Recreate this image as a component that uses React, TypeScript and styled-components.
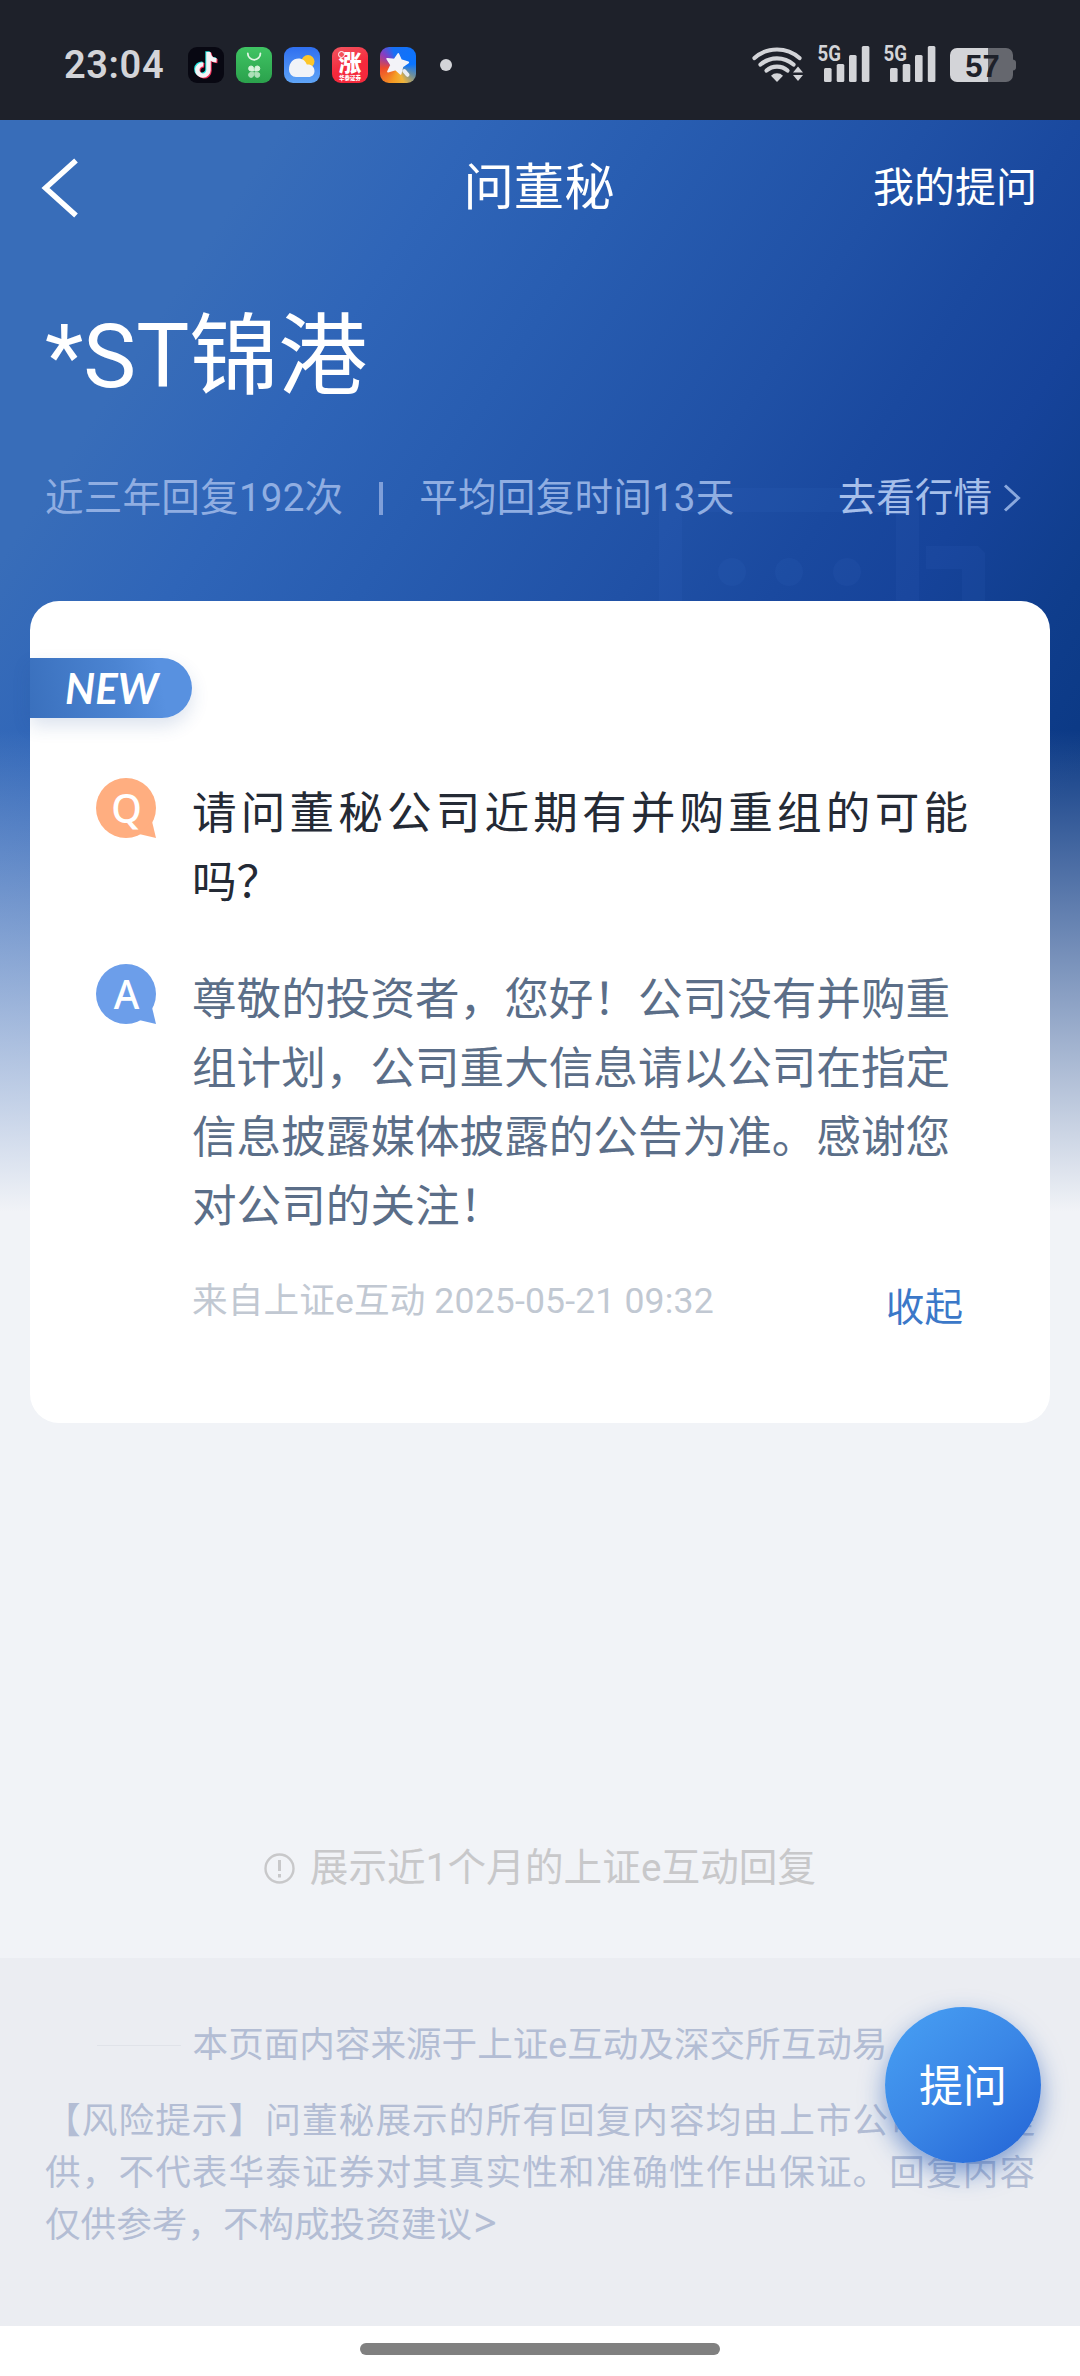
import React from 'react';
import styled, { createGlobalStyle } from 'styled-components';

const sans = `Roboto, 'Noto Sans CJK SC', sans-serif`;

const GlobalStyle = createGlobalStyle`
  *, *::before, *::after { box-sizing: border-box; }
  body { margin: 0; background: #ffffff; }
  p, h1, h2 { margin: 0; font-weight: 400; }
  button { border: 0; padding: 0; background: none; font: inherit; color: inherit; }
  svg { display: block; overflow: visible; }
`;

const Screen = styled.div`
  position: relative;
  width: 1080px;
  height: 2376px;
  display: flex;
  flex-direction: column;
  overflow: hidden;
  background: #f1f3f7;
  font-family: ${sans};
`;

const StatusBar = styled.header`
  height: 120px;
  flex: none;
  display: flex;
  align-items: flex-start;
  justify-content: space-between;
  padding: 45px 64px 0 64px;
  background: #1e212a;
  color: #d3d4d8;
`;

const StatusGroup = styled.div<{ $gap: number }>`
  display: flex;
  align-items: flex-start;
  gap: ${(p) => p.$gap}px;
`;

const Clock = styled.span`
  width: 112px;
  margin-top: -4px;
  font-size: 38px;
  line-height: 48px;
  font-weight: 600;
  letter-spacing: 0.6px;
`;

const AppIcon = styled.span<{ $bg: string }>`
  width: 36px;
  height: 36px;
  margin-top: 2px;
  border-radius: 9px;
  overflow: hidden;
  background: ${(p) => p.$bg};
`;

const RiseIcon = styled(AppIcon)`
  position: relative;
  display: flex;
  flex-direction: column;
  align-items: center;
  color: #fff;
  font-family: 'Noto Sans CJK SC', sans-serif;
  font-weight: 900;

  &::before {
    content: '';
    position: absolute;
    left: 6px;
    top: 4px;
    width: 7px;
    height: 7px;
    border: 1.5px solid #fff;
    border-radius: 50%;
    background: #f4525e;
  }
`;

const RiseGlyph = styled.span`
  font-size: 23px;
  line-height: 28px;
`;

const RiseCaption = styled.span`
  font-size: 5.5px;
  line-height: 7px;
`;

const MoreDot = styled.span`
  width: 12px;
  height: 12px;
  margin: 14px 0 0 12px;
  border-radius: 50%;
  background: #d3d4d8;
`;

const Backdrop = styled.div`
  position: absolute;
  top: 120px;
  left: 0;
  width: 1080px;
  height: 1092px;
  background:
    linear-gradient(180deg, rgba(241, 243, 247, 0) 610px, #f1f3f7 1092px),
    linear-gradient(123deg, #386db9 0, #386db9 240px, #2f65b8 400px, #285db1 560px,
      #2051a6 780px, #1a499f 906px, #16439a 1020px, #0f3d8c 1155px, #0b3984 1260px);
`;

const BackdropArt = styled.svg`
  position: absolute;
  left: 640px;
  top: 350px;
`;

const Content = styled.main`
  position: relative;
  flex: 1;
  display: flex;
  flex-direction: column;
`;

const NavBar = styled.nav`
  height: 136px;
  display: grid;
  grid-template-columns: 1fr auto 1fr;
  align-items: center;
  padding: 0 43px 0 41px;
  color: #fff;
`;

const NavTitle = styled.h1`
  font-size: 50.4px;
  line-height: 60px;
`;

const NavLink = styled.button`
  justify-self: end;
  font-size: 41px;
  line-height: 50px;
`;

const Hero = styled.section`
  height: 345px;
  padding: 48px 45px 0;
  color: #fff;
`;

const StockName = styled.h2`
  font-size: 89px;
  line-height: 106px;
`;

const MetaRow = styled.div`
  display: flex;
  align-items: center;
  justify-content: space-between;
  margin-top: 63px;
  padding-right: 14px;
  font-size: 38.6px;
  line-height: 50px;
  color: #90aee2;
`;

const Stats = styled.div`
  display: flex;
  align-items: center;
  gap: 36px;
  letter-spacing: 0.2px;
`;

const StatDivider = styled.span`
  width: 4px;
  height: 33px;
  background: #7f9fd9;
`;

const QuoteLink = styled.button`
  display: flex;
  align-items: center;
  gap: 11px;
  color: #a6bfea;
`;

const Card = styled.article`
  height: 822px;
  flex: none;
  margin: 0 30px;
  padding-top: 57px;
  border-radius: 29px;
  background: #fff;
`;

const NewTag = styled.div`
  width: 162px;
  height: 60px;
  display: flex;
  align-items: center;
  padding-left: 35px;
  border-radius: 0 30px 30px 0;
  background: linear-gradient(80deg, #3a70bd 0%, #4b84d2 55%, #5891e0 80%);
  box-shadow: 0 8px 18px rgba(40, 80, 150, 0.16);
  color: #fff;
  font-family: Lato, sans-serif;
  font-style: italic;
  font-weight: 700;
  font-size: 42px;
  line-height: 60px;
`;

const Entry = styled.div<{ $top: number }>`
  display: grid;
  grid-template-columns: 60px 776px;
  column-gap: 36px;
  margin-top: ${(p) => p.$top}px;
  padding-left: 66px;
`;

const Bubble = styled.span<{ $color: string }>`
  position: relative;
  width: 60px;
  height: 60px;
  display: flex;
  align-items: center;
  justify-content: center;
  padding-left: 1px;
  border-radius: 50%;
  background: ${(p) => p.$color};
  color: #fff;
  font-family: 'Noto Sans', sans-serif;
  font-size: 39px;
  font-weight: 500;
  line-height: 60px;

  &::after {
    content: '';
    position: absolute;
    right: 0;
    bottom: 0;
    width: 17px;
    height: 17px;
    background: ${(p) => p.$color};
    clip-path: polygon(76% 0, 100% 100%, 0 76%);
  }
`;

const Question = styled.p`
  padding-top: 2px;
  margin-bottom: -2px;
  font-size: 44.6px;
  line-height: 69px;
  text-align: justify;
  color: #242a35;
`;

const Answer = styled.p`
  padding-top: 2px;
  margin-bottom: -2px;
  font-size: 44.6px;
  line-height: 69px;
  color: #5b6e88;
`;

const SourceRow = styled.div`
  display: flex;
  justify-content: space-between;
  margin: 37px 87px 0 162px;
`;

const Source = styled.span`
  font-size: 35.6px;
  line-height: 48px;
  letter-spacing: 0.15px;
  color: #c1c8d2;
`;

const Collapse = styled.button`
  padding-top: 6px;
  font-size: 38.6px;
  line-height: 50px;
  color: #3b78c8;
`;

const Notice = styled.div`
  display: flex;
  align-items: center;
  justify-content: center;
  gap: 15px;
  margin-top: 420px;
  font-size: 38.6px;
  line-height: 50px;
  letter-spacing: 0.1px;
  color: #c8c8ca;
`;

const Footer = styled.footer`
  height: 368px;
  margin-top: auto;
  padding: 61px 45px 0;
  background: #ebedf2;
  font-size: 35.6px;
  line-height: 52px;
  color: #b3bdd4;
`;

const SourceNote = styled.div`
  display: flex;
  align-items: center;
  justify-content: center;
  gap: 12px;
`;

const Rule = styled.span`
  width: 84px;
  height: 1px;
  background: #e0e3e9;
`;

const Risk = styled.p`
  margin-top: 24px;
  text-align: justify;
`;

const Arrow = styled.span`
  padding-left: 2px;
  font-family: 'Noto Sans', sans-serif;
  font-size: 40px;
  font-weight: 500;
  line-height: 1;
`;

const HomeArea = styled.div`
  height: 50px;
  flex: none;
  display: flex;
  justify-content: center;
  padding-top: 17px;
  background: #fff;
`;

const HomeBar = styled.span`
  width: 360px;
  height: 12px;
  border-radius: 6px;
  background: #808080;
`;

const AskButton = styled.button`
  position: absolute;
  left: 885px;
  top: 2007px;
  width: 156px;
  height: 156px;
  padding-top: 5px;
  border-radius: 50%;
  background: linear-gradient(140deg, #4499f0 15%, #3a86e6 50%, #2668d7 92%);
  box-shadow: 0 10px 24px rgba(32, 88, 180, 0.55);
  color: #fff;
  font-size: 44px;
  line-height: 151px;
  text-align: center;
`;

const TikTokIcon = () => (
  <AppIcon $bg="#080812">
    <svg width="36" height="36" viewBox="0 0 36 36" fill="none" strokeWidth="4.4">
      <path transform="translate(-1 -0.8)" stroke="#25e6e0" d="M20.5 5v18a5.6 5.6 0 1 1-5.2-5.6M20.5 6c.6 4.2 3.5 7 8 7.3" />
      <path transform="translate(1 0.8)" stroke="#f5305a" d="M20.5 5v18a5.6 5.6 0 1 1-5.2-5.6M20.5 6c.6 4.2 3.5 7 8 7.3" />
      <path stroke="#f4f4f6" d="M20.5 5v18a5.6 5.6 0 1 1-5.2-5.6M20.5 6c.6 4.2 3.5 7 8 7.3" />
    </svg>
  </AppIcon>
);

const StoreIcon = () => (
  <AppIcon $bg="linear-gradient(180deg, #3fc463, #2ba14c)">
    <svg width="36" height="36" viewBox="0 0 36 36">
      <path d="M11.8 6.5a6.3 6.3 0 0 0 12.6 0" fill="none" stroke="#dff5e3" strokeWidth="1.8" strokeLinecap="round" />
      <g fill="#d8f2dc">
        <path d="M17.6 24h-2.6a2.5 2.5 0 1 1 2.6-2.6z" stroke="#d8f2dc" />
        <path d="M18.8 24h2.6a2.5 2.5 0 1 0-2.6-2.6z" stroke="#d8f2dc" />
        <path d="M17.6 25.400h-2.600a2.500 2.500 0 1 0 2.600 2.600z" stroke="#d8f2dc" opacity="0.75" />
        <path d="M18.800 25.400h2.600a2.500 2.500 0 1 1-2.600 2.600z" stroke="#d8f2dc" opacity="0.75" />
      </g>
    </svg>
  </AppIcon>
);

const WeatherIcon = () => (
  <AppIcon $bg="linear-gradient(180deg, #2f6ff0, #5fa4f6)">
    <svg width="36" height="36" viewBox="0 0 36 36">
      <circle cx="24" cy="14.5" r="6.5" fill="#fdc62a" />
      <path d="M12 30a7 7 0 0 1-7-7.4C5 16 9 11.5 14.5 11.5c4 0 7 2.300 8.300 6 4-.6 7.700 2 7.700 6.500 0 3.700-2.500 6-6 6z" fill="#f1f3f8" />
    </svg>
  </AppIcon>
);

const WandIcon = () => (
  <AppIcon $bg="conic-gradient(from 0deg at 50% 55%, #1670f5 0deg, #0a74ff 80deg, #6d8f9c 120deg, #f0b43a 160deg, #f59a22 200deg, #ee4a2c 265deg, #8a3cc0 310deg, #1670f5 345deg)">
    <svg width="36" height="36" viewBox="0 0 36 36">
      <path
        d="M18.300 7L21 13.200 28.200 15.400 22.400 19.600 20.600 26.800 15.600 22.400 8 24.600 11.200 18 7.200 11.800 14.600 12.600z"
        fill="#f3f3f8"
        stroke="#f3f3f8"
        strokeWidth="1.800"
        strokeLinejoin="round"
      />
      <path d="M24.300 24l3.200 3.800" stroke="#e9ecf2" strokeWidth="4" strokeLinecap="round" />
    </svg>
  </AppIcon>
);

const WifiIcon = () => (
  <svg width="52" height="38" viewBox="0 0 52 38">
    <g fill="none" stroke="#d3d4d8" strokeWidth="4.200" strokeLinecap="round">
      <path d="M2.500 13a34 34 0 0 1 45 0" />
      <path d="M8.500 19.500a25 25 0 0 1 33 0" />
      <path d="M14.500 25.500a16 16 0 0 1 21 0" />
    </g>
    <g fill="#d3d4d8">
      <path d="M25 37l-6-6.200a8.500 8.500 0 0 1 12 0z" />
      <path d="M46 21.500l5 6h-10zM46 36l5-6h-10z" />
    </g>
  </svg>
);

const SignalIcon = () => (
  <svg width="52" height="38" viewBox="0 0 52 38" fill="#d3d4d8">
    <text x="-0.5" y="15.800" fontFamily="Roboto, sans-serif" fontSize="22" fontWeight="700" textLength="23.500" lengthAdjust="spacingAndGlyphs">5G</text>
    <rect x="6" y="23" width="7.600" height="14" rx="1.500" />
    <rect x="18.700" y="19" width="7.600" height="18" rx="1.500" />
    <rect x="31" y="10" width="7.600" height="27" rx="1.500" />
    <rect x="43.800" y="1" width="7.600" height="36" rx="1.500" />
  </svg>
);

const BatteryIcon = () => (
  <svg width="66" height="38" viewBox="0 0 66 38">
    <path d="M38 3h18a7 7 0 0 1 7 7v4.500q3 .5 3 3v5q0 2.500-3 3V30a7 7 0 0 1-7 7H38z" fill="#65676e" />
    <path d="M7 3h31v34H7a7 7 0 0 1-7-7V10a7 7 0 0 1 7-7z" fill="#d3d4d8" />
    <text x="32.500" y="31.500" textAnchor="middle" fontFamily="'Liberation Sans', sans-serif" fontSize="31" fontWeight="700" fill="#1e212a">57</text>
  </svg>
);

export default function App() {
  return (
    <Screen>
      <GlobalStyle />
      <Backdrop>
        <BackdropArt width="360" height="140" viewBox="0 0 360 140">
          <g fill="#4a80dc" fillOpacity="0.08">
            <path d="M19 131V40a22 22 0 0 1 22-22h216a22 22 0 0 1 22 22v91h-23V42H42v89z" />
            <circle cx="92" cy="102" r="14" />
            <circle cx="149" cy="102" r="14" />
            <circle cx="207" cy="102" r="14" />
            <path d="M286 76h52l7 7v48h-23V99h-36z" />
          </g>
        </BackdropArt>
      </Backdrop>

      <StatusBar>
        <StatusGroup $gap={12}>
          <Clock>23:04</Clock>
          <TikTokIcon />
          <StoreIcon />
          <WeatherIcon />
          <RiseIcon $bg="linear-gradient(160deg, #f25560, #f5293c 55%)">
            <RiseGlyph>涨</RiseGlyph>
            <RiseCaption>华泰证券</RiseCaption>
          </RiseIcon>
          <WandIcon />
          <MoreDot />
        </StatusGroup>
        <StatusGroup $gap={14}>
          <WifiIcon />
          <SignalIcon />
          <SignalIcon />
          <BatteryIcon />
        </StatusGroup>
      </StatusBar>

      <Content>
        <NavBar>
          <svg width="38" height="62" viewBox="0 0 38 62" fill="none" stroke="#fff" strokeWidth="5.400">
            <path d="M35 3.500L4.500 31 35 58.500" />
          </svg>
          <NavTitle>问董秘</NavTitle>
          <NavLink>我的提问</NavLink>
        </NavBar>

        <Hero>
          <StockName>*ST锦港</StockName>
          <MetaRow>
            <Stats>
              <span>近三年回复192次</span>
              <StatDivider />
              <span>平均回复时间13天</span>
            </Stats>
            <QuoteLink>
              去看行情
              <svg width="18" height="28" viewBox="0 0 18 28" fill="none" stroke="#8aa8dd" strokeWidth="3">
                <path d="M2 1.500L15.500 14 2 26.500" />
              </svg>
            </QuoteLink>
          </MetaRow>
        </Hero>

        <Card>
          <NewTag>NEW</NewTag>
          <Entry $top={60}>
            <Bubble $color="#ffae80">Q</Bubble>
            <Question>请问董秘公司近期有并购重组的可能吗？</Question>
          </Entry>
          <Entry $top={48}>
            <Bubble $color="#6c9eea">A</Bubble>
            <Answer>
              尊敬的投资者，您好！公司没有并购重组计划，公司重大信息请以公司在指定信息披露媒体披露的公告为准。感谢您对公司的关注！
            </Answer>
          </Entry>
          <SourceRow>
            <Source>来自上证e互动 2025-05-21 09:32</Source>
            <Collapse>收起</Collapse>
          </SourceRow>
        </Card>

        <Notice>
          <svg width="31" height="31" viewBox="0 0 31 31" fill="none" stroke="#c8c8ca" strokeWidth="2.400">
            <circle cx="15.500" cy="15.500" r="14" />
            <path d="M15.500 7v11M15.500 21v3.500" strokeWidth="3" />
          </svg>
          <span>展示近1个月的上证e互动回复</span>
        </Notice>

        <Footer>
          <SourceNote>
            <Rule />
            <span>本页面内容来源于上证e互动及深交所互动易</span>
            <Rule />
          </SourceNote>
          <Risk>
            【风险提示】问董秘展示的所有回复内容均由上市公司自行提供，不代表华泰证券对其真实性和准确性作出保证。回复内容仅供参考，不构成投资建议<Arrow>&gt;</Arrow>
          </Risk>
        </Footer>
        <HomeArea>
          <HomeBar />
        </HomeArea>
      </Content>

      <AskButton>提问</AskButton>
    </Screen>
  );
}
